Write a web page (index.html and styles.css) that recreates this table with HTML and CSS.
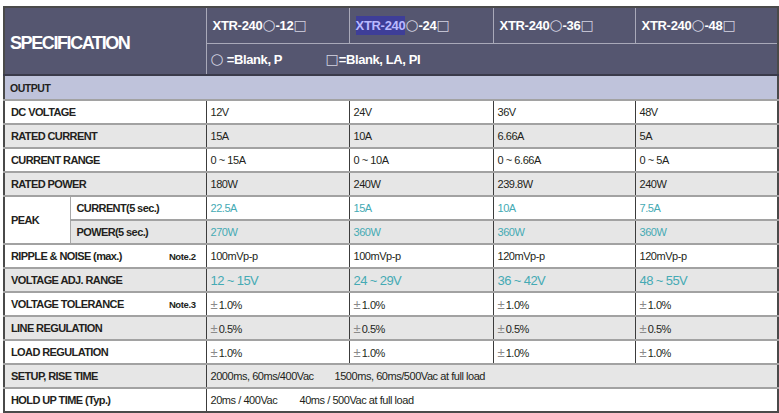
FILE: index.html
```html
<!DOCTYPE html>
<html>
<head>
<meta charset="utf-8">
<link rel="stylesheet" href="styles.css">
</head>
<body>
<table class="spec">
  <colgroup>
    <col class="c-a"><col class="c-b"><col class="c-1"><col class="c-2"><col class="c-3"><col class="c-4">
  </colgroup>
  <thead>
    <tr class="h1">
      <th class="title" colspan="2" rowspan="2">SPECIFICATION</th>
      <th class="model">XTR-240<span class="sym">○</span>-12<span class="sym sq">□</span></th>
      <th class="model"><span class="sel">XTR-240</span><span class="sym">○</span>-24<span class="sym sq">□</span></th>
      <th class="model">XTR-240<span class="sym">○</span>-36<span class="sym sq">□</span></th>
      <th class="model">XTR-240<span class="sym">○</span>-48<span class="sym sq">□</span></th>
    </tr>
    <tr class="h2">
      <th class="legend" colspan="4"><span class="leg1"><span class="sym">○</span> =Blank, P</span><span class="leg2"><span class="sym sq">□</span>=Blank, LA, PI</span></th>
    </tr>
  </thead>
  <tbody>
    <tr class="section"><td colspan="6">OUTPUT</td></tr>
    <tr class="w"><td class="lbl" colspan="2">DC VOLTAGE</td><td>12V</td><td>24V</td><td>36V</td><td>48V</td></tr>
    <tr class="g"><td class="lbl" colspan="2">RATED CURRENT</td><td>15A</td><td>10A</td><td>6.66A</td><td>5A</td></tr>
    <tr class="w"><td class="lbl" colspan="2">CURRENT RANGE</td><td>0 ~ 15A</td><td>0 ~ 10A</td><td>0 ~ 6.66A</td><td>0 ~ 5A</td></tr>
    <tr class="g"><td class="lbl" colspan="2">RATED POWER</td><td>180W</td><td>240W</td><td>239.8W</td><td>240W</td></tr>
    <tr class="w"><td class="lbl peak" rowspan="2">PEAK</td><td class="lbl sub">CURRENT(5 sec.)</td><td class="teal">22.5A</td><td class="teal">15A</td><td class="teal">10A</td><td class="teal">7.5A</td></tr>
    <tr class="g"><td class="lbl sub">POWER(5 sec.)</td><td class="teal">270W</td><td class="teal">360W</td><td class="teal">360W</td><td class="teal">360W</td></tr>
    <tr class="w"><td class="lbl" colspan="2"><div class="lblrow"><span>RIPPLE &amp; NOISE (max.)</span><span class="note">Note.2</span></div></td><td>100mVp-p</td><td>100mVp-p</td><td>120mVp-p</td><td>120mVp-p</td></tr>
    <tr class="g"><td class="lbl" colspan="2">VOLTAGE ADJ. RANGE</td><td class="teal big">12 ~ 15V</td><td class="teal big">24 ~ 29V</td><td class="teal big">36 ~ 42V</td><td class="teal big">48 ~ 55V</td></tr>
    <tr class="w"><td class="lbl" colspan="2"><div class="lblrow"><span>VOLTAGE TOLERANCE</span><span class="note">Note.3</span></div></td><td><span class="pm">±</span>1.0%</td><td><span class="pm">±</span>1.0%</td><td><span class="pm">±</span>1.0%</td><td><span class="pm">±</span>1.0%</td></tr>
    <tr class="g"><td class="lbl" colspan="2">LINE REGULATION</td><td><span class="pm">±</span>0.5%</td><td><span class="pm">±</span>0.5%</td><td><span class="pm">±</span>0.5%</td><td><span class="pm">±</span>0.5%</td></tr>
    <tr class="w"><td class="lbl" colspan="2">LOAD REGULATION</td><td><span class="pm">±</span>1.0%</td><td><span class="pm">±</span>1.0%</td><td><span class="pm">±</span>1.0%</td><td><span class="pm">±</span>1.0%</td></tr>
    <tr class="g"><td class="lbl" colspan="2">SETUP, RISE TIME</td><td colspan="4"><span class="part setup1">2000ms, 60ms/400Vac</span><span class="part">1500ms, 60ms/500Vac at full load</span></td></tr>
    <tr class="w last"><td class="lbl" colspan="2">HOLD UP TIME (Typ.)</td><td colspan="4"><span class="part hold1">20ms / 400Vac</span><span class="part">40ms / 500Vac at full load</span></td></tr>
  </tbody>
</table>
</body>
</html>
```
FILE: styles.css
```css
html, body {
  margin: 0;
  background: #ffffff;
}
body {
  padding: 6px 0 0 3px;
  font-family: "Liberation Sans", Arial, sans-serif;
  color: #231f20;
}
.spec {
  border-collapse: collapse;
  table-layout: fixed;
  width: 775px;
  border: 2px solid #4a4a4a;
}
.c-a { width: 66px; }
.c-b { width: 136px; }
.c-1 { width: 143px; }
.c-2 { width: 144px; }
.c-3 { width: 142px; }
.c-4 { width: 143px; }

th, td {
  padding: 0 0 0 4px;
  text-align: left;
  vertical-align: middle;
  white-space: nowrap;
}
thead th {
  background: #555670;
  color: #ffffff;
  font-weight: bold;
}
.h1 { height: 36px; }
.h2 { height: 32px; }
.title {
  font-size: 18px;
  letter-spacing: -1.4px;
  padding-left: 5px;
  padding-top: 4px;
  border-right: 1px solid #a9a9b9;
  border-bottom: 2px solid #3a3a4a;
}
.model {
  font-size: 13px;
  letter-spacing: -0.3px;
  padding-left: 6px;
  border-left: 1px solid #a9a9b9;
  border-bottom: 1px solid #a9a9b9;
}
.legend {
  font-size: 13px;
  letter-spacing: -0.4px;
  padding-left: 4px;
  border-left: 1px solid #a9a9b9;
  border-bottom: 2px solid #3a3a4a;
  padding-top: 2px;
}
.leg1 { display: inline-block; width: 115px; }
.sym {
  font-family: "DejaVu Sans", sans-serif;
  font-weight: normal;
  color: #d4d4e2;
  font-size: 15px;
  line-height: 1;
  letter-spacing: 0;
}
.sym.sq { font-size: 14px; }
.sel {
  background: #3e3e98;
  color: #b9b9ff;
  padding: 2px 0;
}

tbody td {
  font-size: 11px;
  letter-spacing: -0.45px;
  height: 22px;
  border-bottom: 2px solid #a2a2a2;
  border-left: 1px solid #3c3c3c;
}
tr.last td { border-bottom: 2px solid #4a4a4a; }
.section td {
  background: #bfc3db;
  font-weight: bold;
  font-size: 10.5px;
  height: 23px;
  padding-left: 5px;
}
.w td { background: #ffffff; }
.g td { background: #e6e6e6; }
td.lbl {
  font-weight: bold;
  font-size: 11px;
  letter-spacing: -0.6px;
  padding-left: 6px;
}
td.peak { background: #ffffff; }
td.sub { border-left: 1px solid #a8a8a8; padding-left: 6px; }
.lblrow {
  display: flex;
  justify-content: space-between;
  align-items: center;
  padding-right: 10px;
}
.note { font-size: 9.5px; letter-spacing: -0.4px; }
.teal { color: #45aab4; }
.big { font-size: 13px; letter-spacing: -0.6px; }
.pm {
  color: #8a8a8a;
  font-size: 13px;
  margin-right: 1px;
  letter-spacing: 0;
}
.part { display: inline-block; }
.setup1 { width: 124px; }
.hold1 { width: 89px; }
```
